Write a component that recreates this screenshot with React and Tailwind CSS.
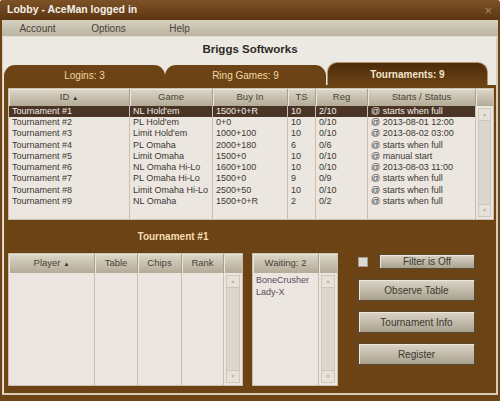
// App.jsx — poker lobby window (Briggs Softworks), tournaments tab
import React from 'react';

const tournaments = [
  ['Tournament #1', 'NL Hold\'em', '1500+0+R', '10', '2/10', '@ starts when full'],
  ['Tournament #2', 'PL Hold\'em', '0+0', '10', '0/10', '@ 2013-08-01 12:00'],
  ['Tournament #3', 'Limit Hold\'em', '1000+100', '10', '0/10', '@ 2013-08-02 03:00'],
  ['Tournament #4', 'PL Omaha', '2000+180', '6', '0/6', '@ starts when full'],
  ['Tournament #5', 'Limit Omaha', '1500+0', '10', '0/10', '@ manual start'],
  ['Tournament #6', 'NL Omaha Hi-Lo', '1600+100', '10', '0/10', '@ 2013-08-03 11:00'],
  ['Tournament #7', 'PL Omaha Hi-Lo', '1500+0', '9', '0/9', '@ starts when full'],
  ['Tournament #8', 'Limit Omaha Hi-Lo', '2500+50', '10', '0/10', '@ starts when full'],
  ['Tournament #9', 'NL Omaha', '1500+0+R', '2', '0/2', '@ starts when full'],
];

const mainCols = [
  { label: 'ID', sort: true, w: 'w-[121px]' },
  { label: 'Game', w: 'w-[83px]' },
  { label: 'Buy In', w: 'w-[75px]' },
  { label: 'TS', w: 'w-[28px]' },
  { label: 'Reg', w: 'w-[52px]' },
  { label: 'Starts / Status', w: 'w-[108px]' },
];

const playerCols = [
  { label: 'Player', sort: true, w: 'w-[86px]' },
  { label: 'Table', w: 'w-[43px]' },
  { label: 'Chips', w: 'w-[44px]' },
  { label: 'Rank', w: 'w-[42px]' },
];

const headCls =
  'flex items-center justify-center border-r border-[#a79f8b] bg-gradient-to-b from-[#ddd7c9] to-[#b3ab97] text-[#4a4236] shadow-[inset_1px_1px_0_#ebe6da]';

function SortArrow() {
  return <span className="ml-[3px] text-[6px] leading-none text-[#2f2a22]">▲</span>;
}

function ScrollTrack() {
  return (
    <div className="flex h-full w-full flex-col justify-between bg-[#dcd6ce] border border-[#cfc8bd]">
      <div className="flex h-[12px] items-center justify-center border-b border-[#cdc6ba] bg-[#e6e1d9]">
        <span className="text-[5px] leading-none text-[#b9b1a4]">▲</span>
      </div>
      <div className="flex h-[12px] items-center justify-center border-t border-[#cdc6ba] bg-[#e6e1d9]">
        <span className="text-[5px] leading-none text-[#b9b1a4]">▼</span>
      </div>
    </div>
  );
}

function Button({ children, className = '' }) {
  return (
    <div
      className={`flex items-center justify-center border border-[#5b4a33] bg-gradient-to-b from-[#dcd5c6] to-[#a9a18e] text-[10px] text-[#3c3830] shadow-[inset_1px_1px_0_#eee8dc] ${className}`}
    >
      {children}
    </div>
  );
}

export default function App() {
  return (
    <div
      className="flex h-[401px] w-[500px] flex-col overflow-hidden rounded-t-[3px] bg-[#6b4315]"
      style={{ fontFamily: '"Liberation Sans", Arial, sans-serif' }}
    >
      {/* ── TITLE BAR ─────────────────────────────────────────────── */}
      <div className="flex h-[20px] shrink-0 items-center justify-between bg-gradient-to-b from-[#7d5226] to-[#5b3611] pl-[7px] pr-[8px]">
        <span className="text-[10.5px] font-bold text-[#f4efe8]">Lobby - AceMan logged in</span>
        <span className="text-[13px] leading-none text-[#a48c70]">×</span>
      </div>

      {/* ── CLIENT AREA ───────────────────────────────────────────── */}
      <div className="mx-[2px] mb-[6px] flex flex-1 flex-col bg-[#ece8e2] pb-[2px] shadow-[inset_1px_0_0_#d8cbb7,inset_-2px_0_0_#d8cbb7,inset_0_-2px_0_#d8cbb7]">
        {/* menu */}
        <div className="flex h-[17px] shrink-0 items-center border-b border-[#e4dfd6] bg-gradient-to-b from-[#d6d0c1] to-[#bbb4a2] text-[10px] text-[#4a4238]">
          <span className="w-[71px] text-center">Account</span>
          <span className="w-[71px] text-center">Options</span>
          <span className="w-[71px] text-center">Help</span>
        </div>

        {/* heading */}
        <div className="flex h-[26px] shrink-0 items-center justify-center text-[11.5px] font-bold text-[#2e2b27]">
          Briggs Softworks
        </div>

        {/* tabs */}
        <div className="flex h-[22px] shrink-0 items-end px-[2px]">
          <div className="flex h-[20px] w-[161px] items-center justify-center rounded-t-[11px] bg-[#6b4315] text-[10px] text-[#f1d7a6]">
            Logins: 3
          </div>
          <div className="flex h-[20px] w-[161px] items-center justify-center rounded-t-[11px] bg-[#6b4315] text-[10px] text-[#f1d7a6]">
            Ring Games: 9
          </div>
          <div className="ml-[1px] flex h-[23px] w-[161px] items-center justify-center rounded-t-[10px] border border-b-0 border-[#b49572] bg-gradient-to-b from-[#4d2c0a] to-[#6b4315] text-[10px] font-bold text-[#f3e4cc]">
            Tournaments: 9
          </div>
          <div className="h-[20px] flex-1 bg-[#ece8e2]" />
        </div>

        {/* ── BROWN PANEL ─────────────────────────────────────────── */}
        <div className="mx-[2px] flex flex-1 flex-col bg-[#6b4315] pl-[4px] pr-[2px] pt-[3px]">
          {/* tournaments table */}
          <div className="flex h-[132px] flex-col border border-[#c9bfae] bg-[#ece6e0]">
            <div className="flex h-[17px] shrink-0 text-[9.5px]">
              {mainCols.map((c) => (
                <div key={c.label} className={`${headCls} ${c.w}`}>
                  {c.label}
                  {c.sort && <SortArrow />}
                </div>
              ))}
              <div className={`${headCls} flex-1 border-r-0`} />
            </div>
            <div className="flex flex-1 text-[9px] text-[#3b3833]">
              {mainCols.map((c, ci) => (
                <div key={c.label} className={`${c.w} border-r border-[#c9c0b1]`}>
                  {tournaments.map((row, ri) => (
                    <div
                      key={ri}
                      className={`flex h-[11.25px] items-center whitespace-nowrap pl-[3px] ${
                        ri === 0 ? 'bg-[#4a3426] text-[#f3eee6]' : ''
                      }`}
                    >
                      {row[ci]}
                    </div>
                  ))}
                </div>
              ))}
              <div className="flex-1 p-[2px]">
                <ScrollTrack />
              </div>
            </div>
          </div>

          {/* lower section */}
          <div className="flex flex-1">
            <div className="flex w-[330px] flex-col">
              <div className="flex h-[33px] items-center justify-center text-[10px] font-bold text-[#f3ddb4]">
                Tournament #1
              </div>
              <div className="flex gap-[9px]">
                {/* players table */}
                <div className="flex h-[133px] w-[235px] flex-col border border-[#c9bfae] bg-[#ece6e0]">
                  <div className="flex h-[19px] shrink-0 text-[9.5px]">
                    {playerCols.map((c) => (
                      <div key={c.label} className={`${headCls} ${c.w}`}>
                        {c.label}
                        {c.sort && <SortArrow />}
                      </div>
                    ))}
                    <div className={`${headCls} flex-1 border-r-0`} />
                  </div>
                  <div className="flex flex-1">
                    {playerCols.map((c) => (
                      <div key={c.label} className={`${c.w} border-r border-[#c9c0b1]`} />
                    ))}
                    <div className="flex-1 p-[2px]">
                      <ScrollTrack />
                    </div>
                  </div>
                </div>

                {/* waiting list */}
                <div className="flex h-[133px] w-[86px] flex-col border border-[#c9bfae] bg-[#ece6e0]">
                  <div className="flex h-[19px] shrink-0 text-[9.5px]">
                    <div className={`${headCls} w-[66px]`}>Waiting: 2</div>
                    <div className={`${headCls} flex-1 border-r-0`} />
                  </div>
                  <div className="flex flex-1">
                    <div className="flex w-[66px] flex-col border-r border-[#c9c0b1] pl-[3px] pt-[1px] text-[9px] leading-[12px] text-[#5b4a5e]">
                      <span>BoneCrusher</span>
                      <span>Lady-X</span>
                    </div>
                    <div className="flex-1 p-[2px]">
                      <ScrollTrack />
                    </div>
                  </div>
                </div>
              </div>
            </div>

            {/* controls */}
            <div className="ml-[20px] flex w-[117px] flex-col pt-[34px]">
              <div className="flex h-[15px] items-center gap-[11px]">
                <div className="h-[10px] w-[10px] shrink-0 border border-[#a39a8a] bg-[#dedad4]" />
                <Button className="h-[15px] flex-1">Filter is Off</Button>
              </div>
              <Button className="mt-[10px] h-[22px]">Observe Table</Button>
              <Button className="mt-[10px] h-[22px]">Tournament Info</Button>
              <Button className="mt-[10px] h-[22px]">Register</Button>
            </div>
          </div>
        </div>
      </div>
    </div>
  );
}
